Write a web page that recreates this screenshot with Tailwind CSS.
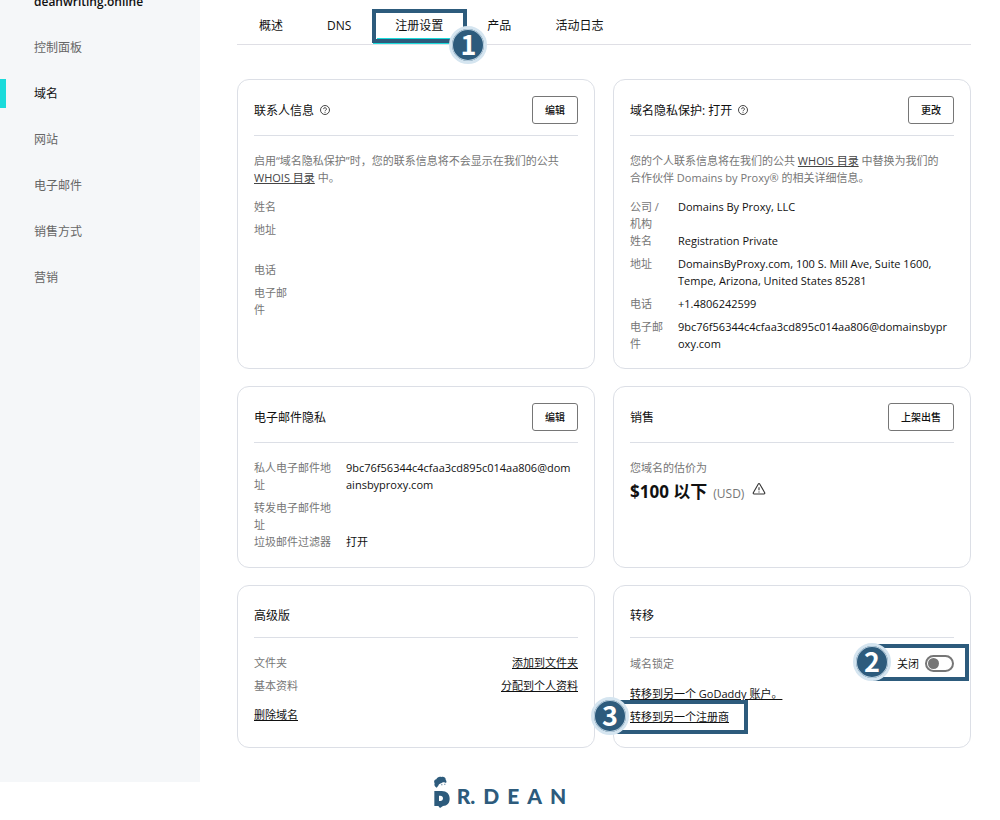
<!DOCTYPE html>
<html lang="zh-CN">
  <head>
    <meta charset="UTF-8" />
    <meta name="viewport" content="width=device-width, initial-scale=1.0" />
    <title>注册设置</title>
    <script src="https://cdn.jsdelivr.net/npm/@tailwindcss/browser@4"></script>
    <style>
      body {
        font-family: "Open Sans", "Noto Sans CJK SC", sans-serif;
      }

      .badge {
        font-family: "Noto Sans CJK SC", sans-serif;
      }

      .logo {
        font-family: Lato, sans-serif;
      }
    </style>
  </head>

  <body class="bg-white text-[#111]">
    <div class="flex">
      <!-- sidebar -->
      <aside class="w-[200px] shrink-0 bg-[#f5f7f9] text-xs">
        <div class="-mt-2 h-[33px] pl-[34px] font-semibold leading-5">deanwriting.online</div>
        <nav class="text-[#666]">
          <a href="#" class="flex items-center h-[46px] pl-[34px]">控制面板</a>
          <a href="#" class="relative flex items-center h-[46px] pl-[34px] text-[#111]">
            <span class="absolute left-0 top-2 w-[6px] h-[29px] bg-[#1bdbdb]"></span>
            域名
          </a>
          <a href="#" class="flex items-center h-[46px] pl-[34px]">网站</a>
          <a href="#" class="flex items-center h-[46px] pl-[34px]">电子邮件</a>
          <a href="#" class="flex items-center h-[46px] pl-[34px]">销售方式</a>
          <a href="#" class="flex items-center h-[46px] pl-[34px]">营销</a>
        </nav>
      </aside>

      <main class="flex-1 pl-[37px] pr-[29px] pb-[34px]">
        <!-- tabs -->
        <nav class="flex h-[45px] pt-[9px] border-b border-[#dfdfe5] text-xs">
          <a href="#" class="h-[35px] px-[22px] leading-[34px]">概述</a>
          <a href="#" class="h-[35px] px-[22px] leading-[34px]">DNS</a>
          <a href="#" class="relative h-[35px] px-[22px] leading-[34px] border-b-2 border-[#1bdbdb]">
            注册设置
            <span class="absolute -left-px -right-[2px] top-0 -bottom-px border-4 border-[#2d5b7c]"></span>
            <span class="absolute left-1 right-1 bottom-[3px] h-px bg-[#1bdbdb]"></span>
            <span
              class="badge absolute -right-[22px] -bottom-[22px] size-[38px] rounded-full border-[3px] border-[#d5e5f0] ring-1 ring-inset ring-[#b9cfde] bg-[#2d5b7c] text-white text-[27px] leading-[30px] font-bold text-center"
              >1</span
            >
          </a>
          <a href="#" class="h-[35px] px-[22px] leading-[34px]">产品</a>
          <a href="#" class="h-[35px] px-[22px] leading-[34px]">活动日志</a>
        </nav>

        <div class="grid grid-cols-2 gap-x-[18px] gap-y-[17px] mt-[34px] text-[11px] leading-[17px] text-[#767676]">
          <!-- contact -->
          <section class="border border-[#dcdfe6] rounded-xl p-4">
            <div class="flex justify-between items-center pb-[11px] border-b border-[#dcdfe6]">
              <h2 class="flex items-center gap-[6px] pt-[2px] text-xs text-[#111]">
                联系人信息
                <svg class="w-[10px] h-[10px] mb-[3px]" viewBox="0 0 20 20" fill="none" stroke="#333" stroke-width="1.8">
                  <circle cx="10" cy="10" r="9" />
                  <path d="M7.2 8.2a2.8 2.8 0 1 1 4 2.5c-.8.4-1.2.8-1.2 1.6" />
                  <path d="M10 13.8v1.8" />
                </svg>
              </h2>
              <button class="h-7 px-3 border border-[#767676] rounded-[3px] text-[10px] text-[#111] font-medium">编辑</button>
            </div>
            <p class="mt-4">
              启用“域名隐私保护”时，您的联系信息将不会显示在我们的公共<br />
              <a href="#" class="underline text-[#444]">WHOIS 目录</a> 中。
            </p>
            <dl class="mt-3 grid grid-cols-[36px_1fr] gap-x-3 gap-y-[6px] text-[#111]">
              <dt class="text-[#767676]">姓名</dt>
              <dd></dd>
              <dt class="text-[#767676] h-[34px]">地址</dt>
              <dd></dd>
              <dt class="text-[#767676]">电话</dt>
              <dd></dd>
              <dt class="text-[#767676]">电子邮件</dt>
              <dd></dd>
            </dl>
          </section>

          <!-- privacy -->
          <section class="border border-[#dcdfe6] rounded-xl p-4">
            <div class="flex justify-between items-center pb-[11px] border-b border-[#dcdfe6]">
              <h2 class="flex items-center gap-[6px] pt-[2px] text-xs text-[#111]">
                域名隐私保护: 打开
                <svg class="w-[10px] h-[10px] mb-[3px]" viewBox="0 0 20 20" fill="none" stroke="#333" stroke-width="1.8">
                  <circle cx="10" cy="10" r="9" />
                  <path d="M7.2 8.2a2.8 2.8 0 1 1 4 2.5c-.8.4-1.2.8-1.2 1.6" />
                  <path d="M10 13.8v1.8" />
                </svg>
              </h2>
              <button class="h-7 px-3 border border-[#767676] rounded-[3px] text-[10px] text-[#111] font-medium">更改</button>
            </div>
            <p class="mt-4">
              您的个人联系信息将在我们的公共
              <a href="#" class="underline text-[#444]">WHOIS 目录</a> 中替换为我们的<br />
              合作伙伴 Domains by Proxy® 的相关详细信息。
            </p>
            <dl class="mt-3 grid grid-cols-[36px_1fr] gap-x-3 gap-y-[6px] text-[#111]">
              <dt class="text-[#767676] -mb-[6px]">公司 /<br />机构</dt>
              <dd>Domains By Proxy, LLC</dd>
              <dt class="text-[#767676]">姓名</dt>
              <dd>Registration Private</dd>
              <dt class="text-[#767676]">地址</dt>
              <dd>DomainsByProxy.com, 100 S. Mill Ave, Suite 1600,<br />Tempe, Arizona, United States 85281</dd>
              <dt class="text-[#767676]">电话</dt>
              <dd>+1.4806242599</dd>
              <dt class="text-[#767676]">电子邮件</dt>
              <dd>9bc76f56344c4cfaa3cd895c014aa806@domainsbypr<wbr />oxy.com</dd>
            </dl>
          </section>

          <!-- email privacy -->
          <section class="border border-[#dcdfe6] rounded-xl p-4 pb-[17px]">
            <div class="flex justify-between items-center pb-[11px] border-b border-[#dcdfe6]">
              <h2 class="pt-[2px] text-xs text-[#111]">电子邮件隐私</h2>
              <button class="h-7 px-3 border border-[#767676] rounded-[3px] text-[10px] text-[#111] font-medium">编辑</button>
            </div>
            <dl class="mt-4 grid grid-cols-[80px_1fr] gap-x-3 gap-y-[6px] text-[#111]">
              <dt class="text-[#767676]">私人电子邮件地址</dt>
              <dd>9bc76f56344c4cfaa3cd895c014aa806@dom<wbr />ainsbyproxy.com</dd>
              <dt class="text-[#767676] -mb-[6px]">转发电子邮件地址</dt>
              <dd></dd>
              <dt class="text-[#767676]">垃圾邮件过滤器</dt>
              <dd>打开</dd>
            </dl>
          </section>

          <!-- sell -->
          <section class="border border-[#dcdfe6] rounded-xl p-4">
            <div class="flex justify-between items-center pb-[11px] border-b border-[#dcdfe6]">
              <h2 class="pt-[2px] text-xs text-[#111]">销售</h2>
              <button class="h-7 px-3 border border-[#767676] rounded-[3px] text-[10px] text-[#111] font-medium">上架出售</button>
            </div>
            <p class="mt-4">您域名的估价为</p>
            <div class="flex items-baseline gap-[6px] mt-1">
              <b class="text-[17px] leading-6 text-[#111]">$100 以下</b>
              <span class="text-xs">(USD)</span>
              <svg class="w-[14px] h-[14px] self-start ml-[2px] mt-[2px]" viewBox="0 0 28 28" fill="none" stroke="#333" stroke-width="2.2">
                <path d="M12.6 3.8 2.6 21.4c-.7 1.2.1 2.6 1.4 2.6h20c1.3 0 2.1-1.4 1.4-2.6L15.4 3.8a1.6 1.6 0 0 0-2.8 0z" />
                <path d="M14 10.5v6M14 18.8v2.4" />
              </svg>
            </div>
          </section>

          <!-- advanced -->
          <section class="border border-[#dcdfe6] rounded-xl p-4 pb-6">
            <div class="h-9 flex items-center pb-[9px] border-b border-[#dcdfe6]">
              <h2 class="pt-[2px] text-xs text-[#111]">高级版</h2>
            </div>
            <div class="mt-4 flex justify-between">
              <span>文件夹</span>
              <a href="#" class="underline text-[#111]">添加到文件夹</a>
            </div>
            <div class="mt-[6px] flex justify-between">
              <span>基本资料</span>
              <a href="#" class="underline text-[#111]">分配到个人资料</a>
            </div>
            <a href="#" class="mt-3 block w-fit underline text-[#111]">删除域名</a>
          </section>

          <!-- transfer -->
          <section class="border border-[#dcdfe6] rounded-xl p-4 pb-[21px]">
            <div class="h-9 flex items-center pb-[9px] border-b border-[#dcdfe6]">
              <h2 class="pt-[2px] text-xs text-[#111]">转移</h2>
            </div>
            <div class="relative mt-4 flex justify-between items-center h-[19px]">
              <label for="lock">域名锁定</label>
              <div class="flex items-center gap-[6px] text-[#111]">
                <span>关闭</span>
                <input
                  id="lock"
                  type="checkbox"
                  class="appearance-none w-[29px] h-[17px] rounded-full border-2 border-[#767676] p-px before:block before:size-[11px] before:rounded-full before:bg-[#767676]"
                />
              </div>
              <span class="absolute -right-[15px] -top-[10px] w-[97px] h-[37px] border-4 border-[#2d5b7c] pointer-events-none"></span>
              <span
                class="badge absolute right-[63px] -top-[11px] size-[38px] rounded-full border-[3px] border-[#d5e5f0] ring-1 ring-inset ring-[#b9cfde] bg-[#2d5b7c] text-white text-[27px] leading-[30px] font-bold text-center"
                >2</span
              >
            </div>
            <a href="#" class="mt-3 block w-fit underline text-[#111]">转移到另一个 GoDaddy 账户。</a>
            <div class="relative mt-[6px] w-fit">
              <a href="#" class="block underline text-[#111]">转移到另一个注册商</a>
              <span class="absolute -left-5 -right-[19px] -top-2 h-[34px] border-4 border-[#2d5b7c] pointer-events-none"></span>
              <span
                class="badge absolute -left-[39px] -top-[11px] size-[38px] rounded-full border-[3px] border-[#d5e5f0] ring-1 ring-inset ring-[#b9cfde] bg-[#2d5b7c] text-white text-[27px] leading-[30px] font-bold text-center"
                >3</span
              >
            </div>
          </section>
        </div>
      </main>
    </div>

    <!-- logo -->
    <footer class="logo flex justify-center items-end h-[38px] pb-3 text-[#2d5b7c]">
      <svg class="w-4 h-8 mr-[7px]" viewBox="0 0 48 96" fill="currentColor">
        <path d="M8 35C2 32 0 27 2 22c-4-6 0-11 5-12 2-7 10-9 15-7 6-3 14 1 13 8 3 3 3 7 1 10-4-3-8-2-12-1-3 3-7 2-9 5-2 4-3 7-7 10z" />
        <path d="M22 25h3v3h-3zM31 23h3v3h-3z" />
        <path fill-rule="evenodd" d="M1 45h22c15 0 24 9 24 23 0 13-8 21-20 22l-9 6-5-6H1V45zm14 14v16h4c5 0 8-3 8-8s-3-8-8-8z" />
      </svg>
      <div class="flex gap-2 text-[21px] leading-6 font-black">
        <span>R.</span><span>D</span><span>E</span><span>A</span><span>N</span>
      </div>
    </footer>
  </body>
</html>
